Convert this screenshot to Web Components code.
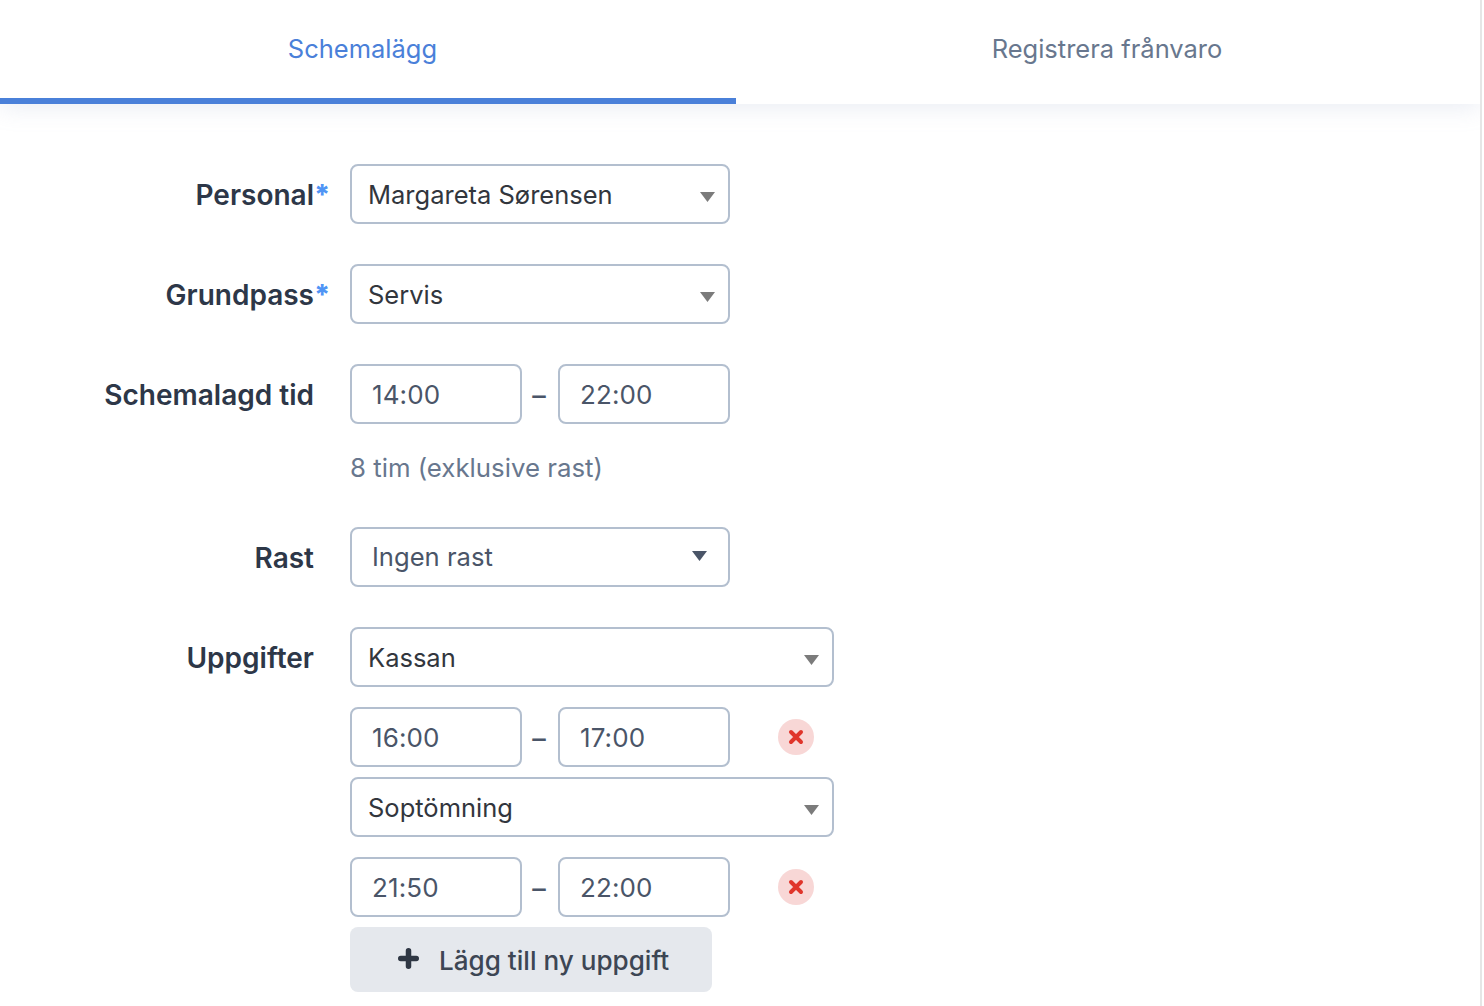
<!DOCTYPE html>
<html lang="sv">
<head>
<meta charset="utf-8">
<title>Schemalägg</title>
<style>
    html, body {
        margin: 0;
        background: #fff;
        font-family: Inter, "Liberation Sans", sans-serif;
    }
</style>
</head>
<body>
<schedule-page>
    <tab-bar slot="tabs">
        <tab-item active>Schemalägg</tab-item>
        <tab-item>Registrera frånvaro</tab-item>
    </tab-bar>

    <form-row label="Personal" required>
        <drop-down>Margareta Sørensen</drop-down>
    </form-row>
    <form-row label="Grundpass" required>
        <drop-down>Servis</drop-down>
    </form-row>
    <form-row label="Schemalagd tid" hint="8 tim (exklusive rast)">
        <time-range from="14:00" to="22:00"></time-range>
    </form-row>
    <form-row label="Rast">
        <drop-down styled>Ingen rast</drop-down>
    </form-row>
    <form-row label="Uppgifter">
        <task-entry name="Kassan" from="16:00" to="17:00"></task-entry>
        <task-entry name="Soptömning" from="21:50" to="22:00"></task-entry>
        <add-button>Lägg till ny uppgift</add-button>
    </form-row>
</schedule-page>

<script>
(function(){
/**
 * Small helper, every element gets an open shadow root from a template string.
 */
function makeTemplate(html) {
    const template = document.createElement("template");
    template.innerHTML = html;
    return template;
}

class Base extends HTMLElement {
    constructor() {
        super();
        this.attachShadow({mode: "open"});
        this.shadowRoot.appendChild(this.constructor.template.content.cloneNode(true));
    }
}

class SchedulePage extends Base {
    static template = makeTemplate(`
    <style>
        :host {
            display: block;
            box-sizing: border-box;
            width: 1482px;
            height: 1006px;
            overflow: hidden;
            border-right: 2px solid #e6e6e6;
        }
        main {
            display: flex;
            flex-direction: column;
            gap: 40px;
            padding-top: 60px;
        }
    </style>
    <slot name="tabs"></slot>
    <main><slot></slot></main>
    `);
}

class TabBar extends Base {
    static template = makeTemplate(`
    <style>
        :host {
            display: grid;
            grid-template-columns: 736px 744px;
            height: 104px;
            box-shadow: 0 4px 22px rgba(160, 174, 205, .22);
            position: relative;
            background: #fff;
        }
    </style>
    <slot></slot>
    `);
}

class TabItem extends Base {
    static template = makeTemplate(`
    <style>
        :host {
            display: block;
            box-sizing: border-box;
            height: 104px;
            padding-top: 32px;
            border-bottom: 6px solid transparent;
            color: #68778e;
            font-size: 25.5px;
            line-height: 34px;
            text-align: center;
        }
        :host([active]) {
            color: #4a80d9;
            border-bottom-color: #4a80d9;
            padding-right: 11px;
        }
        :host(:not([active])) {
            padding-right: 2px;
        }
    </style>
    <slot></slot>
    `);
}

class FormRow extends Base {
    static template = makeTemplate(`
    <style>
        :host {
            display: grid;
            grid-template-columns: 314px 1fr;
            column-gap: 36px;
        }
        label {
            position: relative;
            height: 60px;
            line-height: 62px;
            text-align: right;
            color: #2d3748;
            font-size: 28px;
            font-weight: 600;
        }
        .star {
            position: absolute;
            left: 314px;
            top: 0;
            color: #4f94f5;
            font-size: 28px;
            font-weight: 800;
            display: none;
        }
        :host([required]) .star { display: block; }
        .hint {
            display: none;
            margin-top: 26px;
            height: 37px;
            line-height: 35px;
            color: #68778e;
            font-size: 25.8px;
        }
    </style>
    <label><span id="text"></span><span class="star">*</span></label>
    <div>
        <slot></slot>
        <div class="hint" id="hint"></div>
    </div>
    `);

    connectedCallback() {
        this.shadowRoot.querySelector("#text").textContent = this.getAttribute("label");
        const hint = this.getAttribute("hint");
        if(hint) {
            const el = this.shadowRoot.querySelector("#hint");
            el.textContent = hint;
            el.style.display = "block";
        }
    }
}

class DropDown extends Base {
    static template = makeTemplate(`
    <style>
        :host {
            display: flex;
            align-items: center;
            box-sizing: border-box;
            width: 380px;
            height: 60px;
            padding-left: 16px;
            border: 2px solid #b3bfcf;
            border-radius: 8px;
            background: #fff;
            color: #32363d;
            font-size: 25.5px;
            position: relative;
        }
        :host([wide]) { width: 484px; }
        :host([styled]) {
            padding-left: 20px;
            padding-bottom: 2px;
            color: #4a5568;
            font-size: 25.6px;
        }
        svg {
            position: absolute;
            right: 13px;
            top: 26px;
            fill: #7b7b7b;
        }
        :host([styled]) svg {
            right: 21px;
            top: 22px;
            fill: #4a5568;
        }
    </style>
    <slot></slot>
    <svg width="15" height="10" viewBox="0 0 15 10"><path d="M0 0h15L7.5 10z"/></svg>
    `);
}

class TimeRange extends Base {
    static template = makeTemplate(`
    <style>
        :host {
            display: flex;
            align-items: center;
            gap: 8px;
            width: 380px;
        }
        .field {
            box-sizing: border-box;
            width: 172px;
            height: 60px;
            line-height: 58px;
            padding-left: 20px;
            border: 2px solid #b3bfcf;
            border-radius: 8px;
            color: #4a5568;
            font-size: 26px;
            letter-spacing: .1px;
        }
        .dash {
            width: 20px;
            text-align: center;
            color: #4a5568;
            font-size: 27px;
            font-weight: 500;
            line-height: 30px;
            position: relative;
            left: -1px;
            top: 2px;
        }
    </style>
    <div class="field" id="from"></div>
    <div class="dash">–</div>
    <div class="field" id="to"></div>
    `);

    connectedCallback() {
        this.shadowRoot.querySelector("#from").textContent = this.getAttribute("from");
        this.shadowRoot.querySelector("#to").textContent = this.getAttribute("to");
    }
}

class TaskEntry extends Base {
    static template = makeTemplate(`
    <style>
        :host {
            display: flex;
            flex-direction: column;
            gap: 20px;
            margin-bottom: 10px;
        }
        .times {
            display: flex;
            align-items: center;
            gap: 48px;
        }
        .remove {
            width: 36px;
            height: 36px;
            border-radius: 50%;
            background: #f8d7d6;
            display: flex;
            align-items: center;
            justify-content: center;
        }
    </style>
    <drop-down wide id="name"></drop-down>
    <div class="times">
        <time-range id="range"></time-range>
        <div class="remove">
            <svg width="16" height="16" viewBox="0 0 16 16"><path d="M3 3l10 10M13 3L3 13" stroke="#e0352b" stroke-width="4" stroke-linecap="round"/></svg>
        </div>
    </div>
    `);

    connectedCallback() {
        this.shadowRoot.querySelector("#name").textContent = this.getAttribute("name");
        const range = this.shadowRoot.querySelector("#range");
        range.shadowRoot.querySelector("#from").textContent = this.getAttribute("from");
        range.shadowRoot.querySelector("#to").textContent = this.getAttribute("to");
    }
}

class AddButton extends Base {
    static template = makeTemplate(`
    <style>
        :host {
            display: flex;
            align-items: center;
            box-sizing: border-box;
            width: 362px;
            height: 65px;
            padding-left: 48px;
            padding-top: 1px;
            gap: 20px;
            border-radius: 8px;
            background: #e5e8ed;
            color: #3d4654;
            font-size: 26.1px;
            font-weight: 500;
        }
        svg { position: relative; top: -2px; }
    </style>
    <svg width="21" height="21" viewBox="0 0 21 21"><path d="M10.5 2.75v15.5M2.75 10.5h15.5" stroke="#2f3744" stroke-width="5.5" stroke-linecap="round"/></svg>
    <slot></slot>
    `);
}

customElements.define("drop-down", DropDown);
customElements.define("time-range", TimeRange);
customElements.define("task-entry", TaskEntry);
customElements.define("add-button", AddButton);
customElements.define("form-row", FormRow);
customElements.define("tab-item", TabItem);
customElements.define("tab-bar", TabBar);
customElements.define("schedule-page", SchedulePage);
})();
</script>
</body>
</html>
